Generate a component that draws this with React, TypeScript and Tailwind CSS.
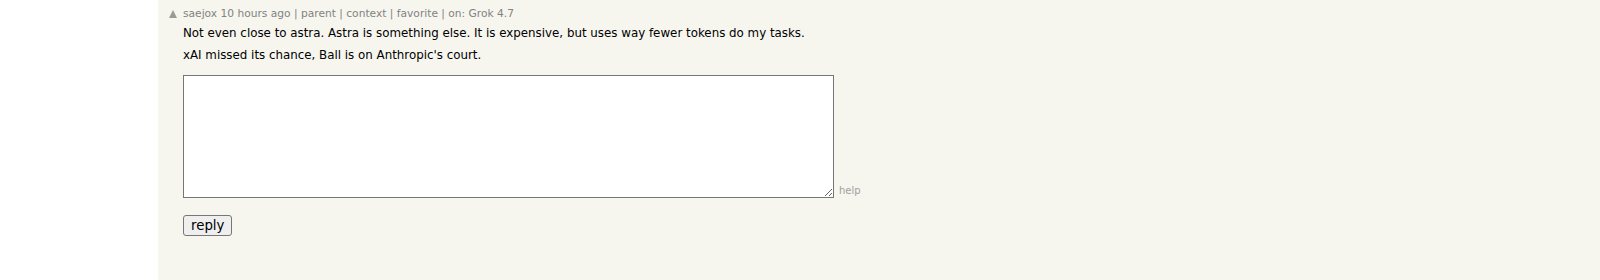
export default function App() {
  return (
    <div className="flex h-[280px] w-[1600px] bg-white" style={{ fontFamily: 'Verdana, "DejaVu Sans", sans-serif' }}>
      <div className="w-[158px] shrink-0" />
      <div className="flex-1 bg-[#f6f6ef]">
        <div className="flex pt-[7px]">
          <div className="w-[25px] shrink-0 pl-[10px] pt-[2px]">
            <svg width="10" height="10" viewBox="0 0 10 10" className="block">
              <polygon points="5,1 9,9 1,9" fill="#9a9a9a" />
            </svg>
          </div>
          <div className="flex flex-col">
            <div className="text-[10.67px] leading-[13px] text-[#828282]">
              saejox 10 hours ago | parent | context | favorite | on: Grok 4.7
            </div>
            <div className="mt-[6px] text-[11.85px] leading-[15px] text-black">
              <p>Not even close to astra. Astra is something else. It is expensive, but uses way fewer tokens do my tasks.</p>
              <p className="mt-[7px]">xAI missed its chance, Ball is on Anthropic's court.</p>
            </div>
            <div className="mt-[12px] flex items-end">
              <textarea className="block h-[123px] w-[651px] resize border border-[#767676] bg-white" />
              <span className="ml-[5px] mb-[1px] text-[10px] leading-[12px] text-[#a0a0a0]">help</span>
            </div>
            <div className="mt-[15px]">
              <button className="rounded-[3px] border border-[#767676] bg-[#efefef] px-[7px] py-[1px] text-[13.33px] leading-[17px] text-black" style={{ fontFamily: '"DejaVu Sans", sans-serif' }}>
                reply
              </button>
            </div>
          </div>
        </div>
      </div>
    </div>
  );
}
